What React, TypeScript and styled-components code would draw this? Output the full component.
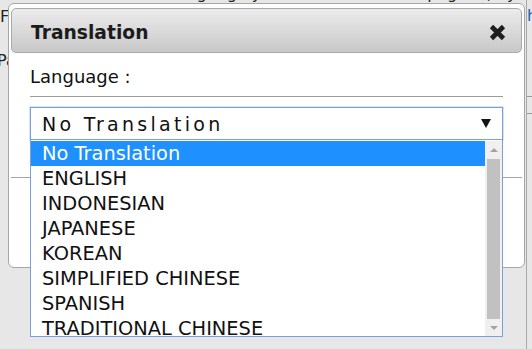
import React from "react";
import styled, { createGlobalStyle } from "styled-components";

const GlobalStyle = createGlobalStyle`
  html, body {
    margin: 0;
    padding: 0;
  }

  body {
    background: #e7e7e7;
    font-family: "DejaVu Sans", Verdana, sans-serif;
    color: #111;
  }
`;

const Page = styled.div`
  position: relative;
  width: 532px;
  height: 349px;
  overflow: hidden;
  background: #e7e7e7;
`;

// the page that sits behind the dialog, only slivers of it show
const Backdrop = styled.div`
  display: flex;
  height: 100%;
`;

const MainColumn = styled.div`
  display: flex;
  flex-direction: column;
  width: 526px;
  font-size: 16px;
  line-height: 20px;
  color: #222;
  white-space: nowrap;
  overflow: hidden;
`;

const TopText = styled.div`
  margin-top: -16px;
  padding-left: 22px;
`;

const SideText = styled.div<{ $gap: number; $shift?: number }>`
  margin-top: ${(p) => p.$gap}px;
  margin-left: ${(p) => p.$shift || 0}px;
`;

const RightColumn = styled.div`
  flex: 1;
  display: flex;
  flex-direction: column;
  border-left: 1px solid #a9a9a9;
  font-size: 16px;
  line-height: 20px;
  overflow: hidden;
`;

const Link = styled.span`
  margin-top: 6px;
  color: #1a5fb4;
  white-space: nowrap;
`;

const Cell = styled.div`
  margin-top: 70px;
  height: 16px;
  border-top: 1px solid #999;
  border-bottom: 1px solid #999;
`;

const Dialog = styled.div`
  position: absolute;
  top: 3px;
  left: 8px;
  width: 517px;
  height: 265px;
  box-sizing: border-box;
  display: flex;
  flex-direction: column;
  padding: 4px 2px 0;
  background: #fff;
  border: 1px solid #a6a6a6;
  border-radius: 6px;
`;

const TitleBar = styled.div`
  height: 45px;
  box-sizing: border-box;
  display: flex;
  align-items: center;
  justify-content: space-between;
  padding: 3px 14px 0 19px;
  border: 1px solid #aaa;
  border-radius: 5px;
  background: linear-gradient(#ececec, #c8c8c8);
`;

const Title = styled.span`
  font-size: 18.7px;
  font-weight: bold;
  color: #1c1c1c;
`;

const CloseButton = styled.button`
  display: flex;
  padding: 0;
  border: none;
  background: none;
  cursor: pointer;
`;

const Body = styled.div`
  padding: 13px 19px 0;
`;

const Label = styled.div`
  font-size: 18px;
  line-height: 21px;
  padding-bottom: 9px;
  border-bottom: 1px solid #9c9c9c;
`;

const SelectWrap = styled.div`
  position: relative;
  margin-top: 10px;
  z-index: 2;
`;

const SelectBox = styled.div`
  height: 33px;
  box-sizing: border-box;
  display: flex;
  align-items: center;
  justify-content: space-between;
  padding: 0 11px;
  border: 1px solid #7a9fdb;
  box-shadow: 0 0 0 1px rgba(140, 175, 230, 0.35);
  font-size: 19px;
  letter-spacing: 3.3px;
  color: #111;
`;

const Caret = styled.span`
  width: 0;
  height: 0;
  margin-top: -1px;
  border-left: 5px solid transparent;
  border-right: 5px solid transparent;
  border-top: 9px solid #141414;
`;

const List = styled.div`
  position: absolute;
  top: 100%;
  left: 0;
  right: 0;
  height: 197px;
  box-sizing: border-box;
  display: flex;
  padding-top: 1px;
  background: #fff;
  border: 1px solid #7a9fdb;
  border-top: none;
`;

const Options = styled.div`
  flex: 1;
  overflow: hidden;
`;

const Option = styled.div<{ $active?: boolean }>`
  height: 25px;
  line-height: 25px;
  padding-left: 11px;
  font-size: 19.4px;
  white-space: nowrap;
  color: ${(p) => (p.$active ? "#fff" : "#111")};
  background: ${(p) => (p.$active ? "#1e90ff" : "transparent")};
`;

const Scrollbar = styled.div`
  width: 17px;
  display: flex;
  flex-direction: column;
  background: #f0f0f0;
`;

const ScrollButton = styled.div<{ $down?: boolean }>`
  height: 17px;
  display: flex;
  align-items: center;
  justify-content: center;

  &::after {
    content: "";
    width: 0;
    height: 0;
    border-left: 4px solid transparent;
    border-right: 4px solid transparent;
    ${(p) =>
      p.$down
        ? "border-top: 4px solid #a3a3a3;"
        : "border-bottom: 4px solid #a3a3a3;"}
  }
`;

const Thumb = styled.div`
  flex: 1;
  margin: 1px 2px 0;
  background: #c1c1c1;
`;

const ButtonPane = styled.div`
  margin-top: 37px;
  border-top: 1px solid #a5a5a5;
`;

const languages = [
  "No Translation",
  "ENGLISH",
  "INDONESIAN",
  "JAPANESE",
  "KOREAN",
  "SIMPLIFIED CHINESE",
  "SPANISH",
  "TRADITIONAL CHINESE",
];

const CloseIcon = () => (
  <svg width="19" height="17" viewBox="0 0 19 17">
    <path
      d="M3.5 2.5 L15.5 14.5 M15.5 2.5 L3.5 14.5"
      stroke="#1e1e1e"
      strokeWidth="4.6"
      fill="none"
    />
  </svg>
);

const App = () => {
  return (
    <>
      <GlobalStyle />
      <Page>
        <Backdrop>
          <MainColumn>
            <TopText>
              Please choose the language you want to read this page in, by key
              type, please
            </TopText>
            <SideText $gap={3}>F</SideText>
            <SideText $gap={24} $shift={-3}>
              Pa
            </SideText>
          </MainColumn>
          <RightColumn>
            <Link>h</Link>
            <Cell />
          </RightColumn>
        </Backdrop>

        <Dialog>
          <TitleBar>
            <Title>Translation</Title>
            <CloseButton>
              <CloseIcon />
            </CloseButton>
          </TitleBar>
          <Body>
            <Label>Language :</Label>
            <SelectWrap>
              <SelectBox>
                <span>No Translation</span>
                <Caret />
              </SelectBox>
              <List>
                <Options>
                  {languages.map((name, i) => (
                    <Option key={name} $active={i === 0}>
                      {name}
                    </Option>
                  ))}
                </Options>
                <Scrollbar>
                  <ScrollButton />
                  <Thumb />
                  <ScrollButton $down />
                </Scrollbar>
              </List>
            </SelectWrap>
          </Body>
          <ButtonPane />
        </Dialog>
      </Page>
    </>
  );
};

export default App;
